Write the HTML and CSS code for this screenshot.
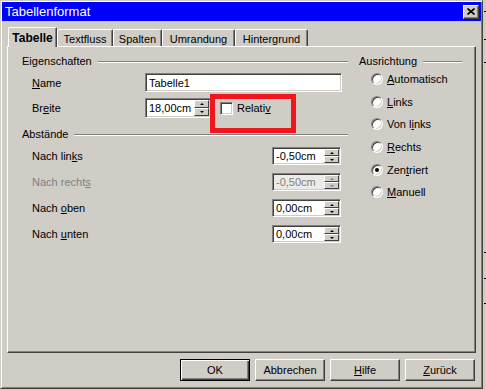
FILE: index.html
```html
<!DOCTYPE html>
<html>
<head>
  <title>Tabellenformat</title>
  <meta charset="UTF-8">
  <link rel="stylesheet" href="styles.css">
</head>
<body>
  <div class="screen">
    <div class="window">
      <div class="titlebar">
        <span>Tabellenformat</span>
        <span class="close">
          <svg width="8" height="7" viewBox="0 0 8 7"><path d="M0.5 0.5 L7.5 6.5 M7.5 0.5 L0.5 6.5" stroke="#000" stroke-width="1.6"/></svg>
        </span>
      </div>

      <div class="tabs">
        <div class="tab active tab-tabelle">Tabelle</div>
        <div class="tab tab-textfluss">Textfluss</div>
        <div class="tab tab-spalten">Spalten</div>
        <div class="tab tab-umrandung">Umrandung</div>
        <div class="tab tab-hintergrund">Hintergrund</div>
      </div>

      <div class="panel">
        <div class="col-left">
          <div class="group-title"><span>Eigenschaften</span><i class="rule"></i></div>
          <div class="row row-name">
            <span class="lbl"><u>N</u>ame</span>
            <span class="field field-name">Tabelle1</span>
          </div>
          <div class="row row-breite">
            <span class="lbl">Br<u>e</u>ite</span>
            <span class="field spin spin-breite">
              <span class="spin-text">18,00cm</span>
              <span class="spin-btns"><i class="up"></i><i class="down"></i></span>
            </span>
            <span class="check-wrap">
              <span class="checkbox"></span>
              <span>Relati<u>v</u></span>
            </span>
          </div>

          <div class="group-title group-abstaende"><span>Abstände</span><i class="rule"></i></div>
          <div class="row row-dist first">
            <span class="lbl lbl-wide">Nach lin<u>k</u>s</span>
            <span class="field spin">
              <span class="spin-text">-0,50cm</span>
              <span class="spin-btns"><i class="up"></i><i class="down"></i></span>
            </span>
          </div>
          <div class="row row-dist disabled">
            <span class="lbl lbl-wide">Nach recht<u>s</u></span>
            <span class="field spin">
              <span class="spin-text">-0,50cm</span>
              <span class="spin-btns"><i class="up"></i><i class="down"></i></span>
            </span>
          </div>
          <div class="row row-dist">
            <span class="lbl lbl-wide">Nach <u>o</u>ben</span>
            <span class="field spin">
              <span class="spin-text">0,00cm</span>
              <span class="spin-btns"><i class="up"></i><i class="down"></i></span>
            </span>
          </div>
          <div class="row row-dist">
            <span class="lbl lbl-wide">Nach <u>u</u>nten</span>
            <span class="field spin">
              <span class="spin-text">0,00cm</span>
              <span class="spin-btns"><i class="up"></i><i class="down"></i></span>
            </span>
          </div>
        </div>

        <div class="col-right">
          <div class="group-title"><span>Ausrichtung</span><i class="rule"></i></div>
          <div class="radio-row"><span class="radio"></span><span><u>A</u>utomatisch</span></div>
          <div class="radio-row"><span class="radio"></span><span><u>L</u>inks</span></div>
          <div class="radio-row"><span class="radio"></span><span>Von l<u>i</u>nks</span></div>
          <div class="radio-row"><span class="radio"></span><span><u>R</u>echts</span></div>
          <div class="radio-row"><span class="radio checked"></span><span>Zen<u>t</u>riert</span></div>
          <div class="radio-row"><span class="radio"></span><span><u>M</u>anuell</span></div>
        </div>
      </div>

      <div class="buttons">
        <span class="btn default">OK</span>
        <span class="btn">Abbrechen</span>
        <span class="btn"><u>H</u>ilfe</span>
        <span class="btn"><u>Z</u>urück</span>
      </div>
    </div>
    <div class="edge"></div>
  </div>
</body>
</html>
```

FILE: styles.css
```css
body {
  margin: 0;
  width: 486px;
  height: 390px;
  overflow: hidden;
  background: #d0ccc6;
  font: 11px "Liberation Sans", Arial, sans-serif;
  color: #000;
}
u {
  text-underline-offset: 1px;
}
.screen {
  display: flex;
  height: 390px;
}
.window {
  width: 483px;
  height: 389px;
  box-sizing: border-box;
  border: 1px solid;
  border-color: #d0ccc6 #404040 #404040 #d0ccc6;
  box-shadow: inset 1px 1px #fff, inset -1px -1px #808080;
  padding: 1px;
  display: flex;
  flex-direction: column;
}
.edge {
  width: 3px;
  background:
    linear-gradient(#000, #000) 1px 11px / 2px 1px no-repeat,
    linear-gradient(#000, #000) 1px 39px / 2px 1px no-repeat,
    linear-gradient(#000, #000) 1px 62px / 2px 1px no-repeat,
    linear-gradient(#000, #000) 1px 252px / 2px 1px no-repeat,
    linear-gradient(#000, #000) 1px 278px / 2px 1px no-repeat,
    linear-gradient(#000, #000) 1px 303px / 2px 1px no-repeat;
}

/* title bar */
.titlebar {
  height: 19px;
  flex: none;
  background: #0000ff;
  color: #fff;
  font-size: 13px;
  display: flex;
  align-items: center;
  justify-content: space-between;
  padding: 0 2px 0 3px;
}
.close {
  width: 16px;
  height: 14px;
  box-sizing: border-box;
  background: #d0ccc6;
  border: 1px solid;
  border-color: #fff #404040 #404040 #fff;
  box-shadow: inset -1px -1px #808080;
  display: flex;
  align-items: center;
  justify-content: center;
}

/* tabs */
.tabs {
  height: 25px;
  flex: none;
  display: flex;
  align-items: flex-end;
  padding-left: 6px;
  position: relative;
  z-index: 1;
}
.tab {
  height: 17px;
  box-sizing: border-box;
  border-top: 1px solid #fff;
  border-left: 1px solid #fff;
  border-right: 1px solid #404040;
  box-shadow: inset -1px 0 #808080;
  border-radius: 2px 2px 0 0;
  padding-top: 2px;
  display: flex;
  align-items: center;
  justify-content: center;
}
.tab.active {
  height: 20px;
  margin-bottom: -1px;
  padding-top: 0;
  background: #d0ccc6;
  font-weight: bold;
  font-size: 12px;
}
.tab-tabelle { width: 49px; }
.tab-textfluss { width: 56px; }
.tab-spalten { width: 49px; }
.tab-umrandung { width: 73px; }
.tab-hintergrund { width: 73px; }

/* panel */
.panel {
  margin-left: 5px;
  width: 469px;
  height: 307px;
  flex: none;
  box-sizing: border-box;
  border: 1px solid;
  border-color: #fff #404040 #404040 #fff;
  box-shadow: inset -1px -1px #808080;
  padding: 8px 0 0 14px;
  display: flex;
}
.col-left {
  width: 326px;
  display: flex;
  flex-direction: column;
}
.col-right {
  width: 103px;
  margin-left: 11px;
}
.group-title {
  height: 13px;
  line-height: 13px;
  display: flex;
  align-items: center;
}
.rule {
  flex: 1;
  height: 0;
  border-top: 1px solid #808080;
  border-bottom: 1px solid #fff;
  margin-left: 6px;
}
.group-abstaende {
  margin-top: 10px;
}
.row {
  display: flex;
  align-items: center;
  padding-left: 10px;
}
.lbl {
  width: 113px;
}
.lbl-wide {
  width: 240px;
}
.row-name {
  margin-top: 5px;
  height: 19px;
}
.row-breite {
  margin-top: 6px;
  height: 20px;
}
.row-dist {
  margin-top: 8px;
  height: 18px;
}
.row-dist.first {
  margin-top: 6px;
}
.row.disabled {
  color: #808080;
}

/* fields */
.field {
  height: 100%;
  box-sizing: border-box;
  border: 1px solid;
  border-color: #808080 #fff #fff #808080;
  box-shadow: inset 1px 1px #404040, inset -1px -1px #d0ccc6;
  background: #fff;
  padding: 0 3px;
  display: flex;
  align-items: center;
}
.field-name {
  width: 197px;
}
.spin {
  width: 69px;
  padding: 1px 1px 1px 3px;
  align-items: stretch;
}
.spin-breite {
  width: 66px;
}
.spin-text {
  flex: 1;
  display: flex;
  align-items: center;
}
.row.disabled .spin {
  background: #ecebe8;
}
.spin-btns {
  width: 15px;
  display: flex;
  flex-direction: column;
}
.spin-btns i {
  flex: 1;
  background: #d0ccc6;
  border: 1px solid;
  border-color: #fff #404040 #404040 #fff;
  display: flex;
  align-items: center;
  justify-content: center;
}
.spin-btns i::after {
  content: "";
  border-left: 2px solid transparent;
  border-right: 2px solid transparent;
}
.spin-btns .up::after {
  border-bottom: 2px solid #000;
}
.spin-btns .down::after {
  border-top: 2px solid #000;
}
.row.disabled .spin-btns .up::after {
  border-bottom-color: #808080;
}
.row.disabled .spin-btns .down::after {
  border-top-color: #808080;
}

/* checkbox with red highlight frame */
.check-wrap {
  position: relative;
  align-self: stretch;
  margin-left: 9px;
  display: flex;
  align-items: center;
}
.check-wrap::after {
  content: "";
  position: absolute;
  left: -10px;
  top: -4px;
  width: 86px;
  height: 39px;
  box-sizing: border-box;
  border: 5px solid #f0161e;
}
.checkbox {
  width: 13px;
  height: 13px;
  box-sizing: border-box;
  border: 1px solid;
  border-color: #808080 #fff #fff #808080;
  box-shadow: inset 1px 1px #404040, inset -1px -1px #d0ccc6;
  background: #fff;
  margin-right: 4px;
}

/* radios */
.radio-row {
  height: 22.6px;
  padding-left: 12px;
  display: flex;
  align-items: center;
}
.radio {
  width: 12px;
  height: 12px;
  box-sizing: border-box;
  border-radius: 50%;
  border: 1px solid;
  border-color: #808080 #fff #fff #808080;
  box-shadow: inset 1px 1px #404040, inset -1px -1px #d0ccc6;
  background: #fff;
  margin-right: 4px;
  display: flex;
  align-items: center;
  justify-content: center;
}
.radio.checked::after {
  content: "";
  width: 4px;
  height: 4px;
  border-radius: 50%;
  background: #000;
}

/* buttons */
.buttons {
  margin-top: 6px;
  padding-right: 6px;
  display: flex;
  justify-content: flex-end;
  gap: 5px;
}
.btn {
  width: 70px;
  height: 22px;
  box-sizing: border-box;
  border: 1px solid;
  border-color: #fff #404040 #404040 #fff;
  box-shadow: inset -1px -1px #808080;
  display: flex;
  align-items: center;
  justify-content: center;
}
.btn.default {
  border-color: #000;
  box-shadow: inset 1px 1px #fff, inset -1px -1px #404040, inset -2px -2px #808080;
}
```
